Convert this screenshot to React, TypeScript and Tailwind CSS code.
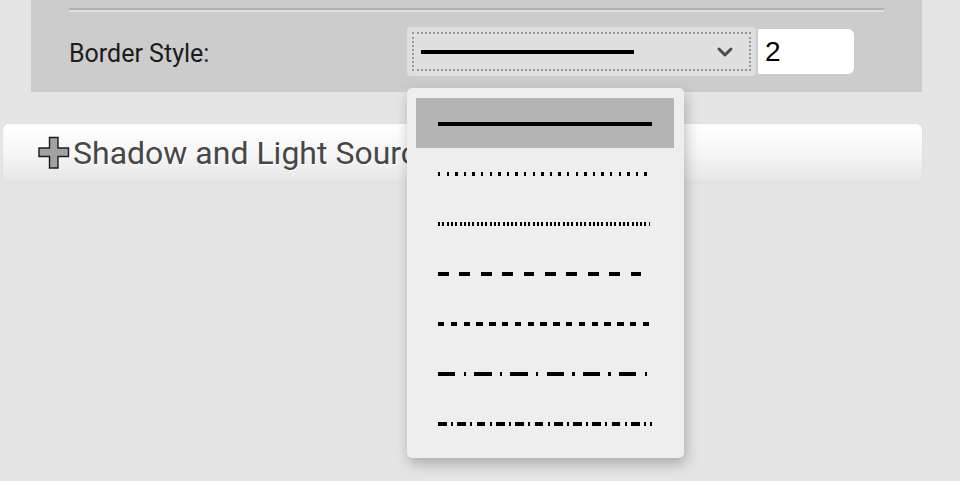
import { ChevronDown } from "lucide-react";

const styles = [
  { len: 214, dash: undefined },
  { len: 209, dash: "2.4 6.2" },
  { len: 212, dash: "2 2.3" },
  { len: 203, dash: "10.7 10.7" },
  { len: 211, dash: "6.4 6.4" },
  { len: 209, dash: "17.3 8.3 2.3 8.3" },
  { len: 214, dash: "8.7 4.3 2 4.3" },
];

function StrokeLine({ len, dash }: { len: number; dash?: string }) {
  return (
    <svg width={214} height={5} className="block" shapeRendering="crispEdges">
      <line x1={0} y1={2.5} x2={len} y2={2.5} stroke="#000" strokeWidth={4} strokeDasharray={dash} />
    </svg>
  );
}

function PlusIcon() {
  return (
    <svg width="33" height="34" viewBox="0 0 33 34" className="block">
      <path
        d="M11.5 1.5h8.5v10.5h10.5v8.5h-10.5v11.5h-8.5v-11.5h-10.5v-8.5h10.5z"
        fill="#fff"
        transform="translate(1 1)"
      />
      <path
        d="M11.5 1.5h8.5v10.5h10.5v8.5h-10.5v11.5h-8.5v-11.5h-10.5v-8.5h10.5z"
        fill="#a2a2a2"
        stroke="#1a1a1a"
        strokeWidth="1.4"
        strokeLinejoin="miter"
      />
    </svg>
  );
}

export default function App() {
  return (
    <div className="relative w-[960px] h-[481px] bg-[#e5e5e5] overflow-hidden font-['Roboto',sans-serif]">
      <div className="ml-[31px] w-[891px] h-[92px] bg-[#cccccc] px-[38px] pt-[8px]">
        <div className="h-[2px] bg-[#b2b2b2]" />
        <div className="h-[2px] bg-[#dedede]" />
        <div className="mt-[15px] flex items-center h-[49px]">
          <div className="w-[338px] text-[25px] text-[#1c1c1c] leading-none pt-[3px]">Border Style:</div>
          <div className="w-[349px] h-[49px] bg-[#dfdfdf] rounded-[4px] p-[5px]">
            <div className="h-full border-2 border-dotted border-[#969696] flex items-center pl-[7px] pr-[12px]">
              <div className="w-[213px] h-[4px] bg-black" />
              <ChevronDown className="ml-auto text-[#4a4a4a]" size={24} strokeWidth={3} />
            </div>
          </div>
          <div className="ml-[2px] w-[96px] h-[45px] bg-white rounded-r-[6px] pl-[7px] flex items-center text-[28px] text-black font-['Liberation_Sans',sans-serif]">
            2
          </div>
        </div>
      </div>

      <div className="mt-[32px] ml-[3px] w-[919px] h-[58px] rounded-[6px] bg-gradient-to-b from-[#ffffff] via-[#f6f6f6] to-[#e6e6e6] shadow-[0_0_2px_rgba(0,0,0,0.08)] flex items-center pl-[35px]">
        <PlusIcon />
        <span className="ml-[2px] text-[32px] text-[#474747] leading-none [text-shadow:1px_1px_0_#fff]">
          Shadow and Light Source
        </span>
      </div>

      <div className="absolute left-[407px] top-[88px] w-[277px] bg-[#eeeeee] rounded-[5px] shadow-[2px_6px_14px_rgba(0,0,0,0.25)] pt-[10px] pb-[10px] pl-[9px] pr-[10px]">
        {styles.map((s, i) => (
          <div
            key={i}
            className={`h-[50px] flex items-center pl-[22px] ${i === 0 ? "bg-[#b4b4b4]" : ""}`}
          >
            <StrokeLine len={s.len} dash={s.dash} />
          </div>
        ))}
      </div>
    </div>
  );
}
